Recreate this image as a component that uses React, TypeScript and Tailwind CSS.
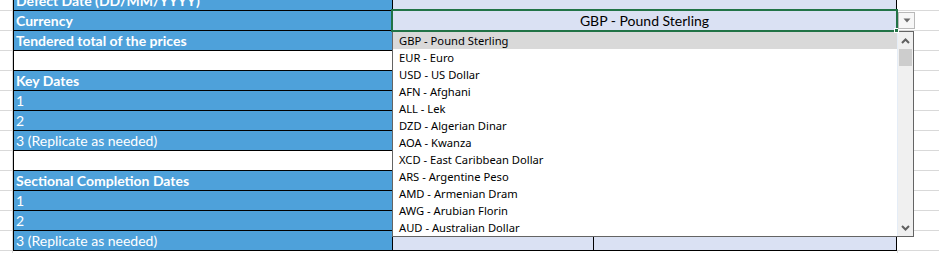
import React from 'react';

type Row = { label: string; bold?: boolean; kind: 'blue' | 'blank'; value?: string; split?: boolean };

const rows: Row[] = [
  { label: 'Defect Date (DD/MM/YYYY)', bold: true, kind: 'blue' },
  { label: 'Currency', bold: true, kind: 'blue', value: 'GBP - Pound Sterling' },
  { label: 'Tendered total of the prices', bold: true, kind: 'blue' },
  { label: '', kind: 'blank' },
  { label: 'Key Dates', bold: true, kind: 'blue' },
  { label: '1', kind: 'blue' },
  { label: '2', kind: 'blue' },
  { label: '3 (Replicate as needed)', kind: 'blue' },
  { label: '', kind: 'blank' },
  { label: 'Sectional Completion Dates', bold: true, kind: 'blue' },
  { label: '1', kind: 'blue' },
  { label: '2', kind: 'blue' },
  { label: '3 (Replicate as needed)', kind: 'blue', split: true },
];

const currencies = [
  'GBP - Pound Sterling',
  'EUR - Euro',
  'USD - US Dollar',
  'AFN - Afghani',
  'ALL - Lek',
  'DZD - Algerian Dinar',
  'AOA - Kwanza',
  'XCD - East Caribbean Dollar',
  'ARS - Argentine Peso',
  'AMD - Armenian Dram',
  'AWG - Arubian Florin',
  'AUD - Australian Dollar',
];

const cellFont = { fontFamily: 'Lato, "Liberation Sans", sans-serif' };

function SheetRow({ row }: { row: Row }) {
  const blue = row.kind === 'blue';
  return (
    <div className="flex h-[20px]">
      <div className="w-[13px] shrink-0 border-t border-r border-[#d9d9d9]" />
      <div
        className={`w-[380px] shrink-0 flex items-end border-t border-x border-black pl-[2px] pb-[1px] text-[14px] leading-[17px] text-white ${
          blue ? 'bg-[#4ea1da]' : 'bg-white'
        } ${row.bold ? 'font-bold' : 'font-normal'}`}
        style={cellFont}
      >
        <span className="whitespace-nowrap">{row.label}</span>
      </div>
      {row.split ? (
        <div className="w-[504px] shrink-0 flex border-t border-r border-black">
          <div className="w-[201px] bg-[#dae1f3] border-r border-black" />
          <div className="flex-1 bg-[#dae1f3]" />
        </div>
      ) : (
        <div
          className={`w-[504px] shrink-0 flex items-end justify-center border-t border-r border-black pb-[1px] text-[14px] leading-[17px] text-black ${
            blue ? 'bg-[#dae1f3]' : 'bg-white'
          }`}
          style={cellFont}
        >
          {row.value && <span className="whitespace-nowrap">{row.value}</span>}
        </div>
      )}
      <div className="flex-1 border-t border-[#d9d9d9]" />
    </div>
  );
}

function Chevron({ up }: { up?: boolean }) {
  return (
    <svg width="9" height="6" viewBox="0 0 9 6" className="block">
      <path
        d={up ? 'M1 5 L4.5 1.5 L8 5' : 'M1 1 L4.5 4.5 L8 1'}
        fill="none"
        stroke="#606060"
        strokeWidth="2"
      />
    </svg>
  );
}

export default function App() {
  return (
    <div className="relative h-[253px] w-[939px] overflow-hidden bg-white">
      <div className="-mt-[10px]">
        {rows.map((row, i) => (
          <SheetRow key={i} row={row} />
        ))}
        <div className="flex h-[20px]">
          <div className="w-[13px] shrink-0 border-t border-r border-[#d9d9d9]" />
          <div className="w-[380px] shrink-0 border-t border-black" />
          <div className="w-[504px] shrink-0 border-t border-black" />
          <div className="flex-1 border-t border-l border-[#d9d9d9]" />
        </div>
      </div>

      {/* dropdown list */}
      <div
        className="absolute left-[392px] top-[31px] flex h-[206px] w-[522px] border border-[#646464] bg-white"
        style={{ fontFamily: '"Noto Sans", "Open Sans", sans-serif' }}
      >
        <div className="w-[504px]">
          {currencies.map((c, i) => (
            <div
              key={c}
              className={`flex h-[17px] items-center pl-[6px] pt-[2px] text-[11.2px] text-black ${i === 0 ? 'bg-[#d9d9d9]' : ''}`}
            >
              {c}
            </div>
          ))}
        </div>
        <div className="flex w-[16px] flex-col border-l border-[#e5edf7] bg-[#f0f0f0]">
          <div className="flex h-[17px] items-center justify-center">
            <Chevron up />
          </div>
          <div className="mx-[1px] h-[17px] bg-[#cdcdcd]" />
          <div className="flex-1" />
          <div className="flex h-[17px] items-center justify-center">
            <Chevron />
          </div>
        </div>
      </div>

      {/* active cell selection */}
      <div className="absolute left-[391px] top-[9px] h-[23px] w-[507px] border-2 border-[#217346]" />
      <div className="absolute left-[894px] top-[28px] h-[5px] w-[5px] border border-white bg-[#217346]" />

      {/* dropdown button */}
      <div className="absolute left-[898px] top-[12px] flex h-[17px] w-[17px] items-center justify-center border border-[#b9b9b9] bg-[#f7f7f7]">
        <svg width="8" height="5" viewBox="0 0 8 5">
          <path d="M0.5 0.5 L7.5 0.5 L4 4.5 Z" fill="#6b6b6b" />
        </svg>
      </div>
    </div>
  );
}
